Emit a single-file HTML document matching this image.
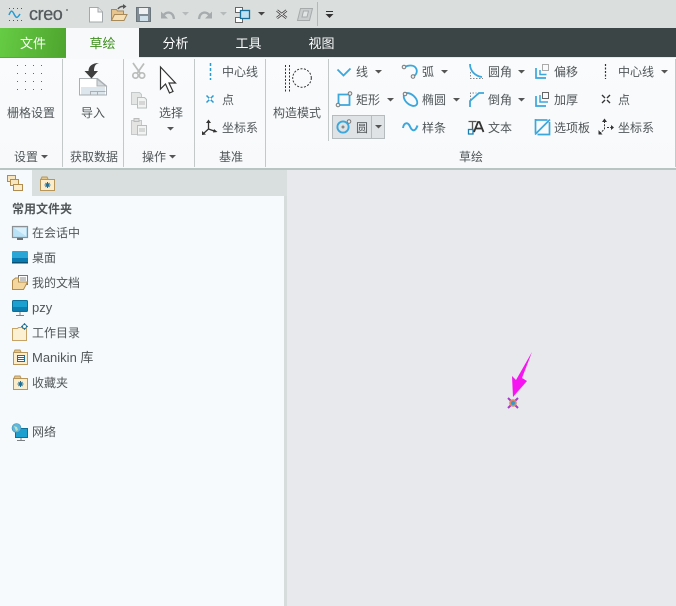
<!DOCTYPE html>
<html lang="zh"><head><meta charset="utf-8"><title>Creo</title>
<style>
html,body{margin:0;padding:0}
body{width:676px;height:606px;overflow:hidden;position:relative;background:#e8e9ed;font-family:"Liberation Sans","Noto Sans CJK SC",sans-serif;font-size:12px;color:#515659}
.a{position:absolute}
.t{position:absolute;white-space:nowrap;line-height:16px;height:16px}
.c{transform:translateX(-50%)}
.tab{position:absolute;top:28px;height:29px;line-height:31px;text-align:center;font-size:13px;color:#fff}
.v{position:absolute;width:1px;background:#c3c9c9}
svg{position:absolute;left:0;top:0}
</style></head><body>
<div class="a" style="left:0;top:0;width:676px;height:28px;background:#dadedd"></div>
<div class="a" style="left:0;top:28px;width:676px;height:29px;background:#3c4546"></div>
<div class="a" style="left:0;top:28px;width:66px;height:29px;background:linear-gradient(100deg,#66cc44,#4ea42e)"></div>
<div class="a" style="left:66px;top:28px;width:73px;height:30px;background:#f7f9fb"></div>
<div class="a" style="left:0;top:57px;width:66px;height:1px;background:#5aa838"></div>
<div class="a" style="left:0;top:58px;width:676px;height:110px;background:linear-gradient(#f9fbfc,#f7f9fb)"></div>
<div class="a" style="left:66px;top:57px;width:73px;height:2px;background:#f7f9fb"></div>
<div class="a" style="left:0;top:168px;width:676px;height:2px;background:#b9c5c3"></div>
<div class="a" style="left:0;top:170px;width:284px;height:436px;background:#f6fafc"></div>
<div class="a" style="left:32px;top:170px;width:255px;height:26px;background:#d9dfde"></div>
<div class="a" style="left:284px;top:196px;width:3px;height:410px;background:#d5dcdb"></div>

<div class="t" style="left:29px;top:5px;font-size:18px;line-height:18px;color:#565b5e;letter-spacing:-.4px;-webkit-text-stroke:.3px #565b5e">creo</div>
<div class="tab" style="left:0;width:66px">文件</div>
<div class="tab" style="left:66px;width:73px;color:#3f8e1e">草绘</div>
<div class="tab" style="left:139px;width:73px">分析</div>
<div class="tab" style="left:212px;width:73px">工具</div>
<div class="tab" style="left:285px;width:73px">视图</div>

<div class="v" style="left:62px;top:59px;height:108px"></div>
<div class="v" style="left:123px;top:59px;height:108px"></div>
<div class="v" style="left:194px;top:59px;height:108px"></div>
<div class="v" style="left:265px;top:59px;height:108px"></div>
<div class="v" style="left:328px;top:59px;height:82px"></div>
<div class="v" style="left:675px;top:59px;height:108px"></div>

<div class="a" style="left:332px;top:115px;width:53px;height:24px;background:#dfe3e5;border:1px solid #b5bcbd;box-sizing:border-box"></div>
<div class="a" style="left:371px;top:115px;width:1px;height:24px;background:#b5bcbd"></div>

<div class="t c" style="left:31px;top:105px">栅格设置</div>
<div class="t c" style="left:93px;top:105px">导入</div>
<div class="t c" style="left:171px;top:105px">选择</div>
<div class="t" style="left:222px;top:64px">中心线</div>
<div class="t" style="left:222px;top:92px">点</div>
<div class="t" style="left:222px;top:120px">坐标系</div>
<div class="t c" style="left:297px;top:105px">构造模式</div>
<div class="t" style="left:356px;top:64px">线</div>
<div class="t" style="left:356px;top:92px">矩形</div>
<div class="t" style="left:356px;top:120px">圆</div>
<div class="t" style="left:422px;top:64px">弧</div>
<div class="t" style="left:422px;top:92px">椭圆</div>
<div class="t" style="left:422px;top:120px">样条</div>
<div class="t" style="left:488px;top:64px">圆角</div>
<div class="t" style="left:488px;top:92px">倒角</div>
<div class="t" style="left:488px;top:120px">文本</div>
<div class="t" style="left:554px;top:64px">偏移</div>
<div class="t" style="left:554px;top:92px">加厚</div>
<div class="t" style="left:554px;top:120px">选项板</div>
<div class="t" style="left:618px;top:64px">中心线</div>
<div class="t" style="left:618px;top:92px">点</div>
<div class="t" style="left:618px;top:120px">坐标系</div>
<div class="t" style="left:14px;top:149px">设置</div>
<div class="t c" style="left:94px;top:149px">获取数据</div>
<div class="t" style="left:142px;top:149px">操作</div>
<div class="t c" style="left:231px;top:149px">基准</div>
<div class="t c" style="left:471px;top:149px">草绘</div>

<div class="t" style="left:12px;top:201px;font-weight:bold">常用文件夹</div>
<div class="t" style="left:32px;top:225px">在会话中</div>
<div class="t" style="left:32px;top:250px">桌面</div>
<div class="t" style="left:32px;top:275px">我的文档</div>
<div class="t" style="left:32px;top:300px;font-size:13px">pzy</div>
<div class="t" style="left:32px;top:325px">工作目录</div>
<div class="t" style="left:32px;top:350px;font-size:13px">Manikin 库</div>
<div class="t" style="left:32px;top:375px">收藏夹</div>
<div class="t" style="left:32px;top:424px">网络</div>

<svg width="676" height="606" viewBox="0 0 676 606" fill="none">
<!-- creo logo -->
<path d="M9 15c2-5 3-5 5-1s3 5 6 0" stroke="#2a9bd0" stroke-width="1.500"/>
<path d="M9 8.500h1M13 8.500h1M17 8.500h1M21 8.500h1M9 20.500h1M13 20.500h1M17 20.500h1M21 20.500h1" stroke="#555"/>
<circle cx="67" cy="10" r="1" fill="#777"/>
<!-- new -->
<path d="M89.500 7.500h8.500l4.500 4.500v10h-13z" fill="#fff" stroke="#a3a8ab"/><path d="M98 7.500v4.500h4.500" stroke="#a3a8ab" fill="#e8e8e8"/>
<!-- open -->
<path d="M111.500 20.500v-11h5l1 1.500h6v9.500z" fill="#e7c48d" stroke="#a88a5a"/><path d="M111.500 20.500l3-6h12.500l-3 6z" fill="#f6dfb5" stroke="#a88a5a"/>
<path d="M118 9c1-2 4-3 6-2.500" stroke="#555" stroke-width="1.500"/><path d="M123 4l3.500 2.500-3.500 2.500z" fill="#555"/>
<!-- save -->
<path d="M136.500 7.500h13.500l.5.5v13.500h-14z" fill="#828d95" stroke="#6a747b"/><rect x="139" y="8" width="9" height="6" fill="#eef0f1"/><rect x="140" y="16" width="8" height="5" fill="#cfe0ea"/>
<!-- undo -->
<path d="M161 11.500v7h7z" fill="#a6abad"/><path d="M163 16c3-5 10-5 11 3" stroke="#a6abad" stroke-width="2.400"/>
<path d="M182 12h7l-3.500 3.500z" fill="#b5babb"/>
<!-- redo -->
<path d="M212 11.500v7h-7z" fill="#a6abad"/><path d="M210 16c-3-5-10-5-11 3" stroke="#a6abad" stroke-width="2.400"/>
<path d="M220 12h7l-3.500 3.500z" fill="#b5babb"/>
<!-- windows -->
<rect x="235.500" y="7.500" width="7" height="5" fill="#fff" stroke="#666"/><rect x="235.500" y="17.500" width="7" height="5" fill="#fff" stroke="#666"/><rect x="240.500" y="10.500" width="9" height="8" fill="#bfe0f0" stroke="#1a6f9a" stroke-width="1.300"/>
<path d="M258 12h7l-3.500 3.500z" fill="#444"/>
<!-- close -->
<path d="M277 10.500l9.500 7.500M286.500 10.500l-9.500 7.500" stroke="#444" stroke-width="2.600"/><path d="M277 10.500l9.500 7.500M286.500 10.500l-9.500 7.500" stroke="#f2f2f2" stroke-width=".8"/>
<!-- regen -->
<path d="M297.500 20.500l3-12h12l-3 12z" fill="#c9cdce" stroke="#a6aaab"/><path d="M302 17l1.500-6h5l-1.500 6z" fill="#e2e5e5" stroke="#a6aaab"/>
<path d="M317.500 2v24" stroke="#b3b8b8"/>
<path d="M326 11h7v1h-7z" fill="#333"/><path d="M325.500 14h8l-4 4z" fill="#333"/>

<!-- grid -->
<g fill="#666"><rect x="17" y="65" width="1" height="1"/><rect x="25" y="65" width="1" height="1"/><rect x="33" y="65" width="1" height="1"/><rect x="41" y="65" width="1" height="1"/><rect x="17" y="73" width="1" height="1"/><rect x="25" y="73" width="1" height="1"/><rect x="33" y="73" width="1" height="1"/><rect x="41" y="73" width="1" height="1"/><rect x="17" y="81" width="1" height="1"/><rect x="25" y="81" width="1" height="1"/><rect x="33" y="81" width="1" height="1"/><rect x="41" y="81" width="1" height="1"/><rect x="17" y="89" width="1" height="1"/><rect x="25" y="89" width="1" height="1"/><rect x="33" y="89" width="1" height="1"/><rect x="41" y="89" width="1" height="1"/></g>
<path d="M41 155h7l-3.500 3.500z" fill="#555"/>
<!-- import -->
<path d="M79.500 78.500h18l9 7.500v9h-27z" fill="#fff" stroke="#a9afb2"/><path d="M97 79v7h9z" fill="#d4dadd" stroke="#a9afb2"/>
<rect x="81" y="87" width="24" height="7.500" fill="#dce6ec"/><path d="M90.500 95v-3.500h15M97.500 91.500v3.500" stroke="#a9afb2"/>
<path d="M99 63c-4 1-5 4-5 8h4l-6.500 7.500-7-7.500h4c0-5 4-8 10.500-8z" fill="#3f3f3f"/>
<!-- cut -->
<path d="M133 63l7 10M144 63.500l-7 10" stroke="#b9bcba" stroke-width="1.700"/><circle cx="135.500" cy="75.500" r="2.700" stroke="#b9bcba" stroke-width="1.700"/><circle cx="142" cy="75.500" r="2.700" stroke="#b9bcba" stroke-width="1.700"/>
<!-- copy -->
<path d="M131.500 92.500h8l2 2v10h-10z" fill="#e4e6e6" stroke="#c4c8c8"/><path d="M137.500 97.500h7l2 2v8.500h-9z" fill="#f1f2f2" stroke="#b9bdbd"/><path d="M139 102h6M139 104h6" stroke="#bbb"/>
<!-- paste -->
<path d="M131.500 120.500h10v14h-10z" fill="#e4e5e2" stroke="#c4c8c8"/><rect x="134" y="118.500" width="5" height="3" fill="#ddd" stroke="#bbb"/><path d="M137.500 125.500h9v9.500h-9z" fill="#f2f3f3" stroke="#b9bdbd"/><path d="M139 129h6M139 131h6" stroke="#bbb"/>
<!-- select arrow -->
<path d="M160.500 67v22l5-5 4 9 3.500-1.500-4-8.500h6.500z" fill="#fff" stroke="#333" stroke-width="1.200"/>
<path d="M167 127h7l-3.500 3.500z" fill="#555"/>
<path d="M169 155h7l-3.500 3.500z" fill="#555"/>
<!-- datum -->
<path d="M210.500 63v3M210.500 68v3M210.500 73v3M210.500 78v2" stroke="#2a9ad4" stroke-width="1.500"/>
<path d="M206.500 95.500l7 7M213.500 95.500l-7 7" stroke="#2a9ad4" stroke-width="1.500"/><rect x="209" y="98" width="2" height="2" fill="#f8fafc"/>
<path d="M208.500 122v7l-5 4.500M208.500 129l7 2.500" stroke="#333" stroke-width="1.300"/><path d="M206 123l2.500-3.500L211 123zM214 129l3.500 3-4.500.5zM202 131l0 4 4-.5" fill="#333"/>
<!-- construction -->
<path d="M285.500 65v27M289.500 65v27" stroke="#333" stroke-dasharray="2 1.500"/>
<circle cx="302" cy="78" r="9.300" stroke="#333" stroke-dasharray="2 1.500"/>
<!-- line -->
<path d="M337.500 69.500l6 6 7-7" stroke="#3ba7dc" stroke-width="1.800"/>
<path d="M375 70h7l-3.500 3.500z" fill="#555"/>
<!-- rect -->
<path d="M338.500 94.500h11v10.500h-11z" stroke="#3ba7dc" stroke-width="1.800"/><circle cx="350" cy="93.500" r="1.800" fill="#eee" stroke="#777"/><circle cx="338" cy="105" r="1.800" fill="#eee" stroke="#777"/>
<path d="M387 98h7l-3.500 3.500z" fill="#555"/>
<!-- circle -->
<circle cx="343" cy="127" r="5.600" stroke="#3ba7dc" stroke-width="1.900"/><circle cx="343" cy="127" r="1.500" fill="#888"/><circle cx="349" cy="121.500" r="1.800" fill="#eee" stroke="#777"/>
<path d="M375 125h7l-3.500 3.500z" fill="#555"/>
<!-- arc -->
<path d="M405 67c3-2 8-2 10 0 3 3 2 7-1 9" stroke="#3ba7dc" stroke-width="1.800"/><circle cx="404" cy="67" r="1.800" fill="#eee" stroke="#777"/><circle cx="413" cy="76.500" r="1.800" fill="#eee" stroke="#777"/>
<path d="M441 70h7l-3.500 3.500z" fill="#555"/>
<!-- ellipse -->
<ellipse cx="410.500" cy="99.500" rx="8" ry="4.800" transform="rotate(42 410.500 99.500)" stroke="#3ba7dc" stroke-width="1.800"/><circle cx="405" cy="94" r="1.800" fill="#eee" stroke="#777"/>
<path d="M453 98h7l-3.500 3.500z" fill="#555"/>
<!-- spline -->
<path d="M403 128c1-6 5-6 7-1.500s5 6 7.500-1" stroke="#3ba7dc" stroke-width="2"/>
<!-- fillet -->
<path d="M470 64c0 7 5 12 12 13" stroke="#3ba7dc" stroke-width="1.800"/><path d="M470 78.500h13M470.500 72v6" stroke="#888" stroke-dasharray="1.500 1.500"/>
<path d="M518 70h7l-3.500 3.500z" fill="#555"/>
<!-- chamfer -->
<path d="M470 107v-6l9-8h5" stroke="#3ba7dc" stroke-width="1.800"/><path d="M470.500 100v-7h6" stroke="#888" stroke-dasharray="1.500 1.500"/>
<path d="M518 98h7l-3.500 3.500z" fill="#555"/>
<!-- text -->
<path d="M468.500 121.500h8M472.500 121.500v9" stroke="#555" stroke-width="1.300"/><rect x="468.500" y="129.500" width="4.500" height="4.500" fill="#fff" stroke="#1a7fb0" stroke-width="1.300"/><path d="M474 132l4-10h1.500l4 10M476 128.500h5.500" stroke="#333" stroke-width="1.800"/>
<!-- offset -->
<path d="M536 68v10h10" stroke="#3ba7dc" stroke-width="1.700"/><path d="M540 70v4.500h6.500" stroke="#3ba7dc" stroke-width="1.500"/><path d="M542.500 64.500h6v6h-6z" fill="#f8fafc" stroke="#aaa"/>
<!-- thicken -->
<path d="M536 96v10h10" stroke="#3ba7dc" stroke-width="1.700"/><path d="M540 95v7h8" stroke="#3ba7dc" stroke-width="1.500"/><path d="M542.500 92.500h6v6h-6z" fill="#f8fafc" stroke="#666"/>
<!-- palette -->
<path d="M535.500 120h12" stroke="#3ba7dc" stroke-width="1.700"/><path d="M535.500 119v14" stroke="#3ba7dc" stroke-width="1.700"/><path d="M535 134.500l15-15" stroke="#3ba7dc" stroke-width="1.700"/><path d="M549.500 122v12.500h-12" stroke="#3ba7dc" stroke-width="1.700"/>
<!-- right col -->
<path d="M605.500 64v15" stroke="#333" stroke-width="1.200" stroke-dasharray="2 1.500"/>
<path d="M661 70h7l-3.500 3.500z" fill="#555"/>
<path d="M602 95l3 3M610 95l-3 3M602 103l3-3M610 103l-3-3" stroke="#333" stroke-width="1.400"/>
<path d="M604.500 121v8l-5 5M607 127.500h5" stroke="#333" stroke-dasharray="2 1.200"/><path d="M602 122l2.500-3.500L607 122zM611 125l3 2.500-3 2.500zM598.500 130v4.500h4" fill="#333"/>

<!-- sidebar tabs -->
<path d="M7.500 175.500h8v6h-8z" fill="#f8e6c0" stroke="#b08c4e"/><path d="M10.500 179.500h8v6h-8z" fill="#f8e6c0" stroke="#b08c4e"/><path d="M13.500 184.500h9v6h-9z" fill="#fbeccb" stroke="#b08c4e"/>
<path d="M40.500 179.500h14v11h-14z" fill="#fbeccb" stroke="#b8965a"/><path d="M41 179l1-2h5l1 2" fill="#e3c78d" stroke="#b8965a"/><path d="M47.500 182v6M44.500 185h6M45.500 183l4 4M49.500 183l-4 4" stroke="#1d6e96"/>

<!-- session -->
<rect x="12.500" y="226.500" width="15" height="11" fill="#b9e2f7" stroke="#8b9094" stroke-width="1.200"/><path d="M14 228h12v8z" fill="#d8f0fb"/><rect x="17" y="238" width="6" height="2" fill="#6b7073"/>
<!-- desktop -->
<rect x="12" y="251" width="16" height="12" rx="1" fill="#29a6d6"/><rect x="12" y="258" width="16" height="5" fill="#0a7bb0"/><rect x="12" y="262" width="16" height="1.500" fill="#0b4f72"/>
<!-- docs -->
<path d="M18.500 275.500h9v9h-9z" fill="#fff" stroke="#777"/><path d="M20 278h6M20 280h6" stroke="#888"/><path d="M12.500 289.500v-9l3-2.500h3v4h9l-4 7.500z" fill="#f3d79f" stroke="#b08c4e"/>
<!-- pzy -->
<rect x="12.500" y="300.500" width="15" height="11" rx="1" fill="#1ba0d0" stroke="#0e6f99"/><rect x="13" y="307" width="14" height="4" fill="#0c7fb0"/><path d="M20 312v3M16 315.500h8" stroke="#7a8083"/>
<!-- work dir -->
<path d="M12.500 340.500v-12h5l1-1h4v1h4v12z" fill="#fdf1d4" stroke="#c6a468"/><path d="M24.500 323v7M21 326.500h7" stroke="#1d8fc4" stroke-width="1.300"/><circle cx="24.500" cy="326.500" r="2" fill="#fff" stroke="#1d6e96"/>
<!-- manikin -->
<path d="M13.500 352.500h14v12h-14z" fill="#fbeccb" stroke="#b8965a"/><path d="M14 352l1-2h5l1 2" fill="#e3c78d" stroke="#b8965a"/><rect x="17.500" y="355.500" width="7" height="6" fill="#fff" stroke="#1d6e96"/><path d="M18 357.500h6M18 359.500h6" stroke="#1d6e96"/>
<!-- fav -->
<path d="M13.500 378.500h14v11h-14z" fill="#fbeccb" stroke="#b8965a"/><path d="M14 378l1-2h5l1 2" fill="#e3c78d" stroke="#b8965a"/><path d="M20.500 381v6M17.500 384h6M18.500 382l4 4M22.500 382l-4 4" stroke="#1d6e96"/>
<!-- net -->
<rect x="15.500" y="428.500" width="12" height="9" fill="#1ba0d0" stroke="#0e6f99"/><path d="M21 438v2M17 440.500h8" stroke="#7a8083"/><circle cx="16.500" cy="428" r="4.500" fill="#5fb7dd" stroke="#3d8fb3" stroke-width=".6"/><path d="M14 426l3 1 1 3-2 1z" fill="#bfe2c0"/>

<!-- arrow -->
<path d="M532 352L522 378 527 381 513 397 512 376 516 380z" fill="#f614f0"/>
<path d="M508 398l10 10M518 398l-10 10" stroke="#a838d0" stroke-width="2"/><circle cx="513" cy="403" r="3.800" fill="#d88a68"/><circle cx="513" cy="403" r="2" fill="#2f9ad0"/>
</svg>
</body></html>
